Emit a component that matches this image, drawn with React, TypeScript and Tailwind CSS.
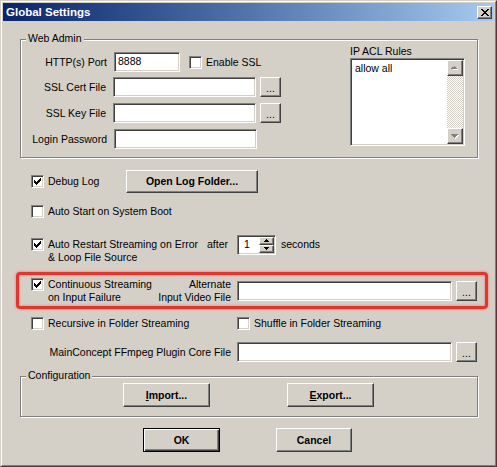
import React from "react";

const sunken =
  "border border-t-[#808080] border-l-[#808080] border-r-white border-b-white shadow-[inset_1px_1px_0_#404040,inset_-1px_-1px_0_#D4D0C8]";
const raised =
  "border border-t-white border-l-white border-r-[#404040] border-b-[#404040] shadow-[inset_-1px_-1px_0_#808080]";

const checkRows: [number, number, number][] = [
  [6, 0, 1],
  [5, 1, 2],
  [0, 2, 1],
  [4, 2, 3],
  [0, 3, 2],
  [3, 3, 3],
  [0, 4, 5],
  [1, 5, 3],
  [2, 6, 1],
];

function Check({ on }: { on?: boolean }) {
  return (
    <span className={`inline-flex h-[13px] w-[13px] shrink-0 items-center justify-center bg-white ${sunken}`}>
      {on && (
        <svg width="7" height="7" viewBox="0 0 7 7" shapeRendering="crispEdges">
          {checkRows.map(([x, y, w], i) => (
            <rect key={i} x={x} y={y} width={w} height={1} fill="#000" />
          ))}
        </svg>
      )}
    </span>
  );
}

function Btn({ className = "", children }: { className?: string; children: React.ReactNode }) {
  return (
    <button className={`flex shrink-0 items-center justify-center bg-[#D4D0C8] ${raised} ${className}`}>
      {children}
    </button>
  );
}

function Dots() {
  return <Btn className="h-[20px] w-[21px] pt-[3px]">...</Btn>;
}

function Group({ label, className = "", children }: { label: string; className?: string; children: React.ReactNode }) {
  return (
    <div
      className={`relative ml-[17px] w-[458px] shrink-0 border border-[#808080] shadow-[inset_1px_1px_0_#fff,1px_1px_0_#fff] ${className}`}
    >
      <span className="absolute -top-[8px] left-[5px] bg-[#D4D0C8] px-[2px]">{label}</span>
      {children}
    </div>
  );
}

function Arrow({ up, color = "#000" }: { up?: boolean; color?: string }) {
  return (
    <svg width="5" height="3" viewBox="0 0 5 3" shapeRendering="crispEdges">
      {up ? (
        <>
          <rect x="2" y="0" width="1" height="1" fill={color} />
          <rect x="1" y="1" width="3" height="1" fill={color} />
          <rect x="0" y="2" width="5" height="1" fill={color} />
        </>
      ) : (
        <>
          <rect x="0" y="0" width="5" height="1" fill={color} />
          <rect x="1" y="1" width="3" height="1" fill={color} />
          <rect x="2" y="2" width="1" height="1" fill={color} />
        </>
      )}
    </svg>
  );
}

function ScrollBtn({ up }: { up?: boolean }) {
  return (
    <div className={`flex h-[16px] w-[16px] items-center justify-center bg-[#D4D0C8] ${raised}`}>
      <svg width="8" height="5" viewBox="0 0 8 5" shapeRendering="crispEdges">
        {up ? (
          <>
            <path d="M4 1h1v1h1v1h1v1H2V3h1V2h1z" fill="#fff" />
            <path d="M3 0h1v1h1v1h1v1H0V2h1V1h2z" fill="#808080" />
          </>
        ) : (
          <>
            <path d="M1 1h7v1h-1v1h-1v1h-1v1h-1V4H3V3H2V2H1z" fill="#fff" />
            <path d="M0 0h7v1h-1v1h-1v1h-1v1H3V3H2V2H1V1H0z" fill="#808080" />
          </>
        )}
      </svg>
    </div>
  );
}

const input = `h-[20px] shrink-0 bg-white ${sunken}`;

export default function App() {
  return (
    <div className="h-[467px] w-[497px] bg-[#D4D0C8] font-['Liberation_Sans',Arial,sans-serif] text-[10.5px] leading-[13px] text-black">
      <div className="h-full border border-t-[#D4D0C8] border-l-[#D4D0C8] border-r-[#404040] border-b-[#404040]">
        <div className="flex h-full flex-col border border-t-white border-l-white border-r-[#808080] border-b-[#808080] p-px">
          {/* title bar */}
          <div className="flex h-[18px] shrink-0 items-center bg-linear-to-r from-[#0A246A] to-[#A6CAF0] pl-[3px] pr-[2px]">
            <span className="text-[11.5px] font-bold leading-[14px] text-white">Global Settings</span>
            <div className={`ml-auto flex h-[13px] w-[15px] items-center justify-center bg-[#D4D0C8] ${raised}`}>
              <svg width="8" height="7" viewBox="0 0 8 7" shapeRendering="crispEdges">
                <path d="M0 0h2v1h1v1h2V1h1V0h2v1H7v1H6v1H5v1h1v1h1v1h1v1H6V6H5V5H3v1H2v1H0V6h1V5h1V4h1V3H2V2H1V1H0z" fill="#000" />
              </svg>
            </div>
          </div>

          {/* body */}
          <div className="flex flex-col">
            <Group label="Web Admin" className="mt-[18px] flex h-[119px]">
              <div className="flex w-[260px] flex-col pt-[12px]">
                <div className="flex h-[20px] items-center">
                  <span className="w-[86px] text-right">HTTP(s) Port</span>
                  <span className={`${input} ml-[7px] w-[66px] pl-[3px] leading-[17px]`}>8888</span>
                  <span className="ml-[9px] flex items-center gap-[4px]">
                    <Check />
                    <span>Enable SSL</span>
                  </span>
                </div>
                <div className="mt-[5px] flex h-[20px] items-center">
                  <span className="w-[86px] text-right">SSL Cert File</span>
                  <span className={`${input} ml-[7px] w-[143px]`} />
                  <span className="ml-[4px]">
                    <Dots />
                  </span>
                </div>
                <div className="mt-[6px] flex h-[20px] items-center">
                  <span className="w-[86px] text-right">SSL Key File</span>
                  <span className={`${input} ml-[7px] w-[143px]`} />
                  <span className="ml-[4px]">
                    <Dots />
                  </span>
                </div>
                <div className="mt-[6px] flex h-[20px] items-center">
                  <span className="w-[86px] text-right">Login Password</span>
                  <span className={`${input} ml-[7px] w-[143px]`} />
                </div>
              </div>
              <div className="ml-[69px] flex flex-col pt-[5px]">
                <span>IP ACL Rules</span>
                <div className={`flex h-[88px] w-[115px] bg-white ${sunken}`}>
                  <div className="flex-1 pl-[4px] pt-[3px]">allow all</div>
                  <div className="my-px mr-px flex w-[16px] flex-col">
                    <ScrollBtn up />
                    <div className="flex-1 bg-[repeating-conic-gradient(#D4D0C8_0_25%,#fff_0_50%)] bg-size-[2px_2px]" />
                    <ScrollBtn />
                  </div>
                </div>
              </div>
            </Group>

            {/* Debug log */}
            <div className="ml-[28px] mt-[12px] flex h-[23px] items-center">
              <Check on />
              <span className="ml-[4px] w-[78px]">Debug Log</span>
              <Btn className="h-[23px] w-[132px] font-bold">Open Log Folder...</Btn>
            </div>

            {/* Auto start */}
            <div className="ml-[28px] mt-[12px] flex h-[13px] items-center gap-[4px]">
              <Check />
              <span>Auto Start on System Boot</span>
            </div>

            {/* Auto restart */}
            <div className="ml-[28px] mt-[20px] flex items-start">
              <Check on />
              <div className="ml-[4px] flex flex-col">
                <div className="flex h-[13px] items-center">
                  <span className="w-[159px] whitespace-nowrap">Auto Restart Streaming on Error</span>
                  <span className="w-[30px]">after</span>
                  <span className={`flex h-[20px] w-[39px] shrink-0 bg-white ${sunken}`}>
                    <span className="flex-1 pl-[6px] leading-[17px]">1</span>
                    <span className="mr-px mt-px flex h-[16px] w-[15px] flex-col">
                      <span className={`flex h-[8px] items-center justify-center bg-[#D4D0C8] ${raised}`}>
                        <Arrow up />
                      </span>
                      <span className={`flex h-[8px] items-center justify-center bg-[#D4D0C8] ${raised}`}>
                        <Arrow />
                      </span>
                    </span>
                  </span>
                  <span className="ml-[5px]">seconds</span>
                </div>
                <span>&amp; Loop File Source</span>
              </div>
            </div>

            {/* Continuous streaming (highlighted) */}
            <div className="ml-[13px] mt-[8px] flex h-[37px] w-[472px] items-center rounded-[4px] border-[3px] border-[#E2352C] pl-[12px] shadow-[0_0_2px_1px_rgba(240,120,110,0.55),inset_0_0_2px_1px_rgba(240,120,110,0.5)]">
              <div className="flex w-[200px] items-center">
                <div className="flex items-start">
                  <Check on />
                  <span className="ml-[4px] whitespace-nowrap">
                    Continuous Streaming
                    <br />
                    on Input Failure
                  </span>
                </div>
                <span className="flex-1 whitespace-nowrap text-right">
                  Alternate
                  <br />
                  Input Video File
                </span>
              </div>
              <span className={`${input} ml-[6px] w-[215px]`} />
              <span className="ml-[4px]">
                <Dots />
              </span>
            </div>

            {/* Folder streaming */}
            <div className="ml-[28px] mt-[8px] flex h-[13px] items-center">
              <div className="flex w-[206px] items-center gap-[4px]">
                <Check />
                <span>Recursive in Folder Streaming</span>
              </div>
              <div className="flex items-center gap-[4px]">
                <Check />
                <span>Shuffle in Folder Streaming</span>
              </div>
            </div>

            {/* MainConcept */}
            <div className="ml-[28px] mt-[12px] flex h-[20px] items-center">
              <span className="w-[200px] text-right">MainConcept FFmpeg Plugin Core File</span>
              <span className={`${input} ml-[6px] w-[215px]`} />
              <span className="ml-[4px]">
                <Dots />
              </span>
            </div>

            <Group label="Configuration" className="mt-[14px] flex h-[41px] pl-[102px] pt-[6px]">
              <Btn className="h-[24px] w-[87px] font-bold">
                <u>I</u>mport...
              </Btn>
              <Btn className="ml-[77px] h-[24px] w-[87px] font-bold">
                <u>E</u>xport...
              </Btn>
            </Group>

            {/* OK / Cancel */}
            <div className="mt-[11px] flex pl-[140px]">
              <button className="flex h-[24px] w-[77px] items-center justify-center border border-black bg-[#D4D0C8] font-bold shadow-[inset_1px_1px_0_#fff,inset_-1px_-1px_0_#404040,inset_-2px_-2px_0_#808080]">
                OK
              </button>
              <Btn className="ml-[56px] h-[24px] w-[76px] font-bold">Cancel</Btn>
            </div>
          </div>
        </div>
      </div>
    </div>
  );
}
